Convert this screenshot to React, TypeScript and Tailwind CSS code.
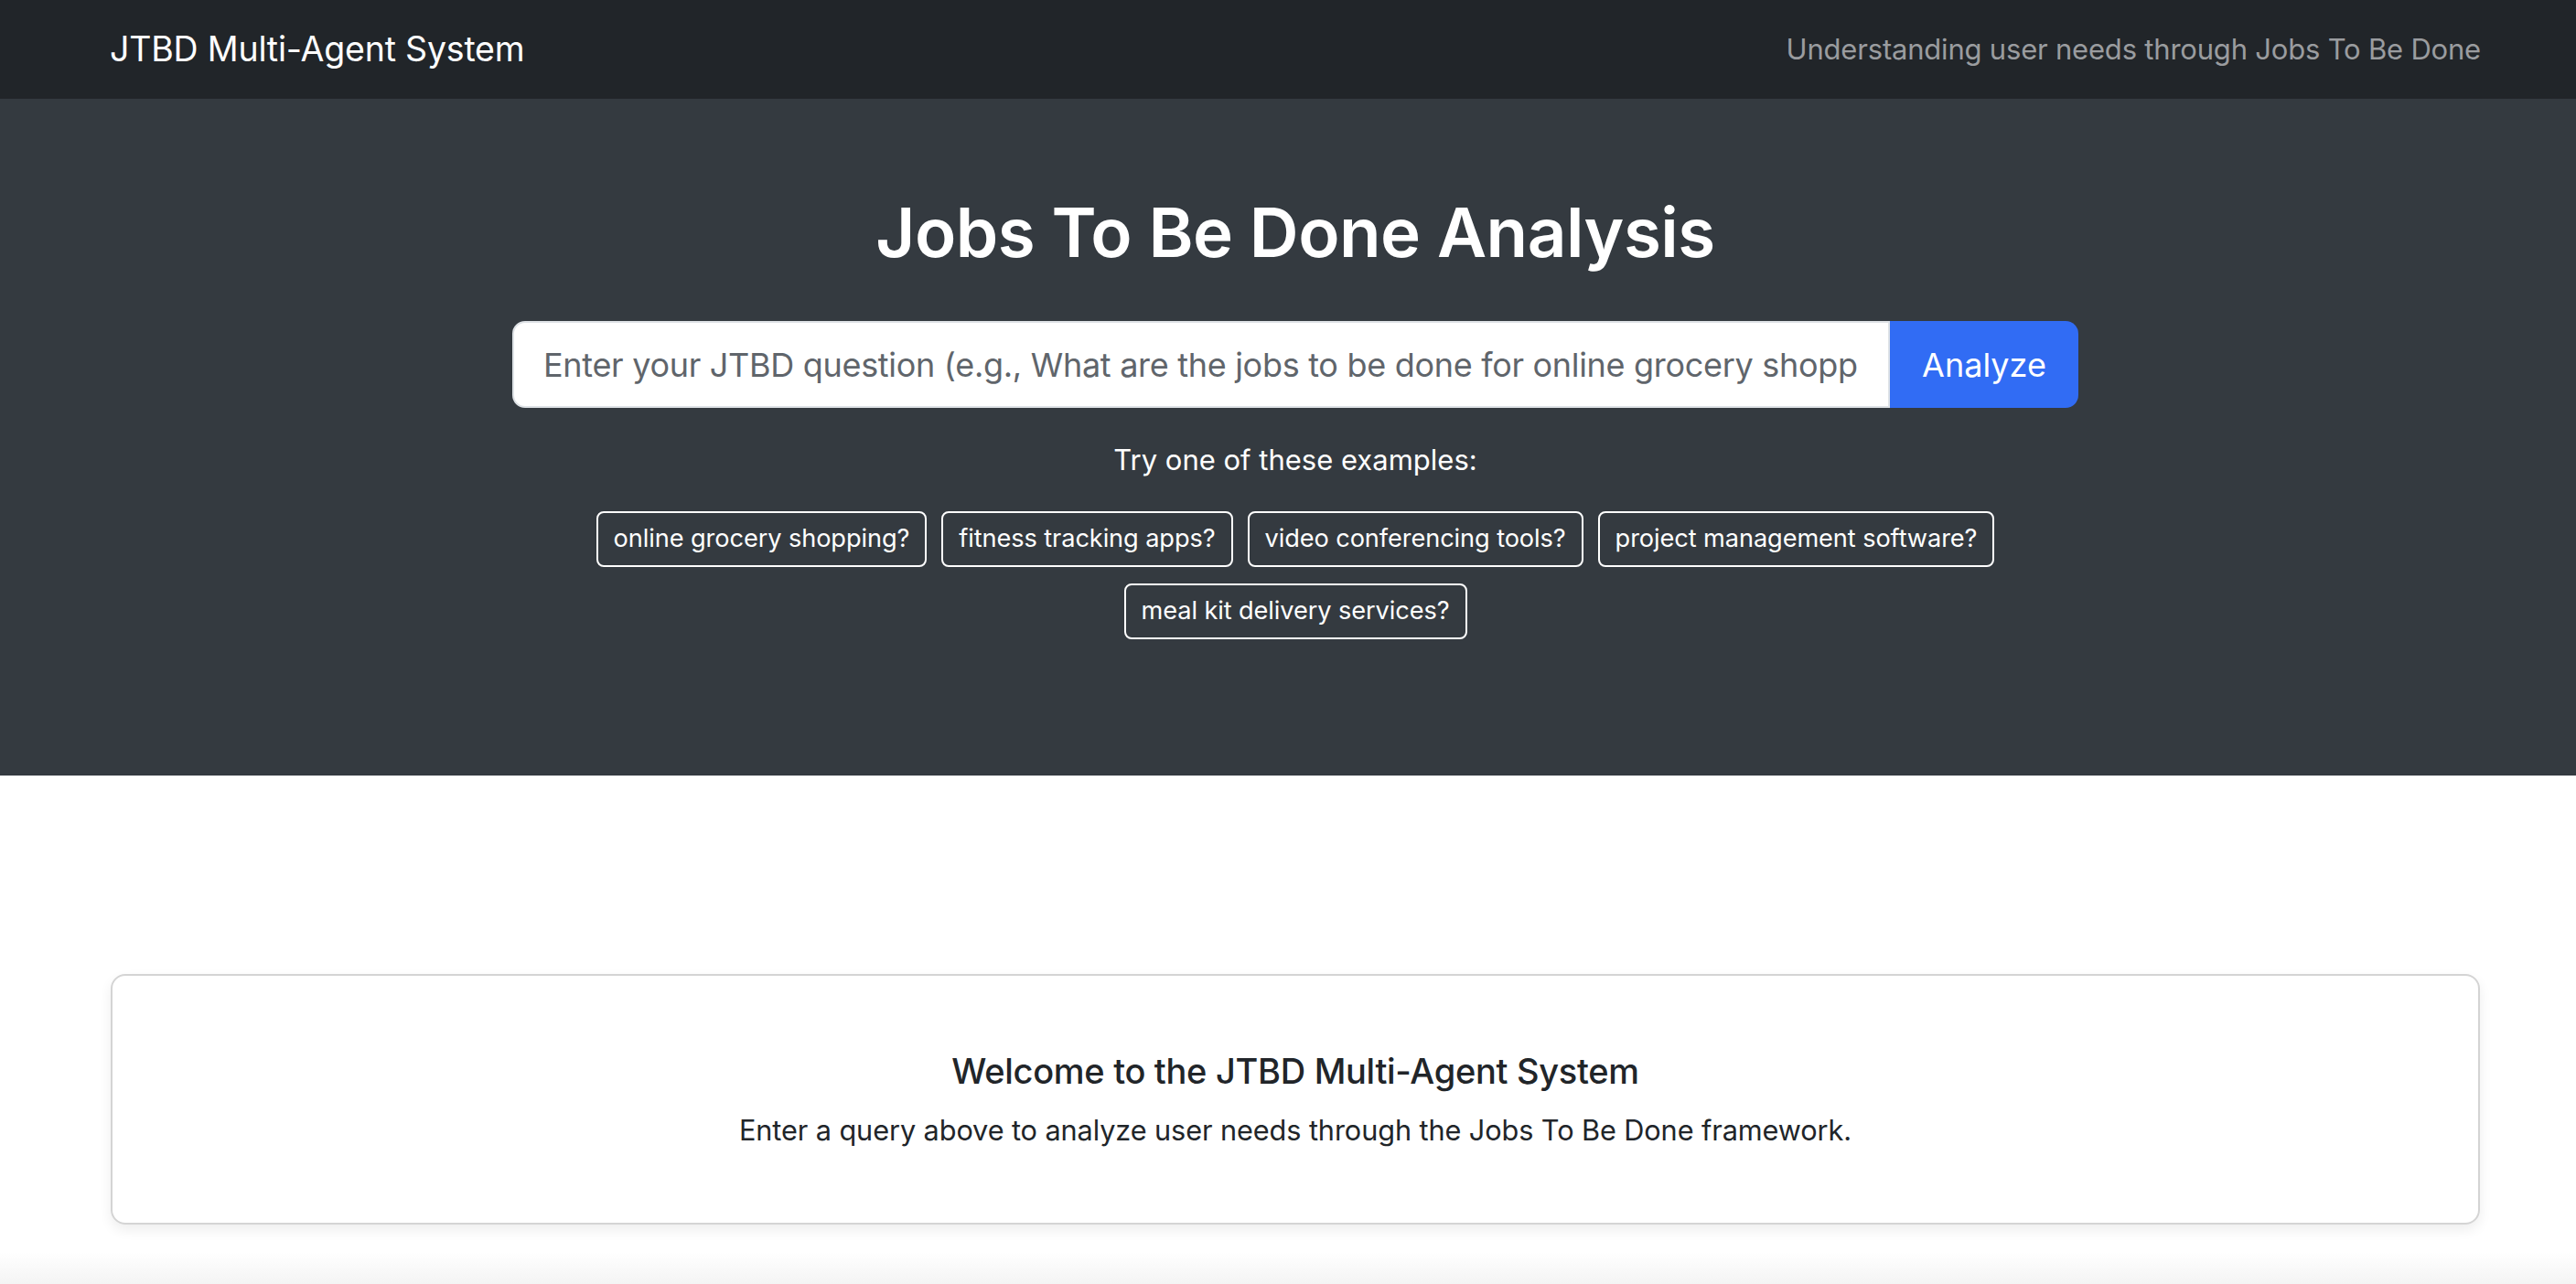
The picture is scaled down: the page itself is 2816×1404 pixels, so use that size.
import React, { useState } from 'react';

const examples = [
  'online grocery shopping?',
  'fitness tracking apps?',
  'video conferencing tools?',
  'project management software?',
  'meal kit delivery services?',
];

export default function App() {
  const [query, setQuery] = useState('');

  return (
    <div className="min-h-[1404px] bg-white flex flex-col font-['Inter','Noto_Sans',sans-serif]">
      {/* Navbar */}
      <nav className="h-[108px] bg-[#212529] flex items-center pl-[120px] pr-[104px] justify-between">
        <span className="text-white text-[37.5px] tracking-[-0.2px]">JTBD Multi-Agent System</span>
        <span className="text-[#9a9c9f] text-[31px] tracking-[-0.2px]">Understanding user needs through Jobs To Be Done</span>
      </nav>

      {/* Hero */}
      <section className="h-[740px] bg-[#343a40] flex flex-col items-center pl-[16px] pt-[102px]">
        <h1 className="text-white text-[74.5px] font-semibold leading-[1.2] tracking-[-0.5px]">Jobs To Be Done Analysis</h1>
        <div className="mt-[52px] flex w-[1712px] h-[95px]">
          <input
            value={query}
            onChange={(e) => setQuery(e.target.value)}
            placeholder="Enter your JTBD question (e.g., What are the jobs to be done for online grocery shopping?)"
            className="flex-1 min-w-0 bg-white rounded-l-[14px] border-2 border-[#dee2e6] px-[32px] text-[36px] text-[#212529] placeholder:text-[#60656b] outline-none tracking-[-0.3px]"
          />
          <button className="w-[206px] bg-[#316cf4] text-white text-[36px] rounded-r-[14px]">Analyze</button>
        </div>
        <p className="mt-[34px] text-white text-[31px] leading-[1.5]">Try one of these examples:</p>
        <div className="mt-[32px] flex flex-wrap justify-center gap-x-[16px] gap-y-[18px] w-[1600px]">
          {examples.map((ex) => (
            <button
              key={ex}
              className="h-[61px] px-[17px] border-2 border-white rounded-[8px] text-white text-[27.2px] tracking-[-0.1px]"
            >
              {ex}
            </button>
          ))}
        </div>
      </section>

      {/* Welcome */}
      <main className="pl-[121px] pr-[105px] pt-[217px]">
        <div className="h-[274px] border-2 border-[#d4d4d4] rounded-[16px] shadow-[0_6px_14px_rgba(0,0,0,0.07)] flex flex-col items-center justify-center pt-[4px]">
          <h2 className="text-[#212529] text-[38px] font-medium leading-[1.2] tracking-[-0.3px]">Welcome to the JTBD Multi-Agent System</h2>
          <p className="mt-[18px] text-[#212529] text-[30.7px] tracking-[-0.1px]">Enter a query above to analyze user needs through the Jobs To Be Done framework.</p>
        </div>
      </main>

      <div className="flex-1 mt-[30px] bg-gradient-to-b from-white to-[#f4f4f4]" />
    </div>
  );
}
